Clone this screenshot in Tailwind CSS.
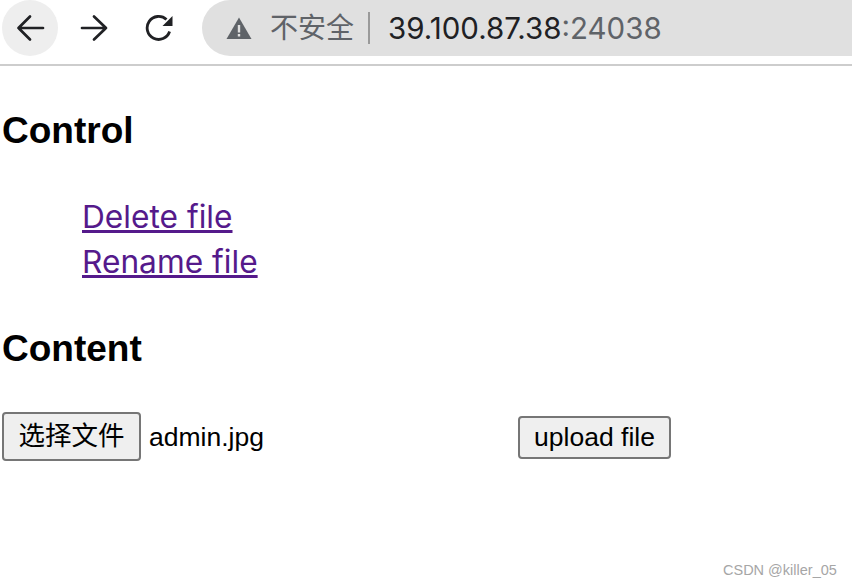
<!DOCTYPE html>
<html lang="zh">
<head>
    <meta charset="UTF-8">
    <title>Control</title>
    <script src="https://cdn.jsdelivr.net/npm/@tailwindcss/browser@4"></script>
</head>
<body class="bg-white text-black w-[852px] h-[586px] overflow-hidden relative font-['Liberation_Sans','Noto_Sans_CJK_SC',sans-serif]">

    <!-- Browser toolbar -->
    <div class="h-[66px] border-b-2 border-[#cdcdcd] flex items-start">
        <div class="w-[56px] h-[56px] ml-[2px] rounded-full bg-[#eeeeee] flex items-center justify-center">
            <svg width="30" height="30" viewBox="0 0 30 30" fill="none" stroke="#202124" stroke-width="2.700" stroke-linecap="round" stroke-linejoin="round"><path d="M28 15H3.500M15 3.500 3.500 15 15 26.500"/></svg>
        </div>
        <div class="w-[30px] h-[56px] ml-[21px] flex items-center justify-center">
            <svg width="30" height="30" viewBox="0 0 30 30" fill="none" stroke="#202124" stroke-width="2.700" stroke-linecap="round" stroke-linejoin="round"><path d="M3 15h24M15 3.500 27 15 15 26.500"/></svg>
        </div>
        <div class="w-[30px] h-[56px] ml-[36px] flex items-center justify-center">
            <svg width="30" height="30" viewBox="0 0 30 30" fill="none"><path d="M24.600 18.500A11.500 11.500 0 1 1 21.500 6.500" stroke="#202124" stroke-width="2.800"/><path d="M27.500 3v10h-10z" fill="#202124"/></svg>
        </div>
        <div class="ml-[27px] flex-1 h-[56px] bg-[#e0e0e0] rounded-l-[28px] flex items-center">
            <svg class="ml-[24px]" width="26" height="24" viewBox="0 0 26 24"><path d="M13 1.500 25.500 23H.5z" fill="#5f6368"/><path d="M11.800 9h2.400v7.500h-2.400zM11.800 18h2.400v2.500h-2.400z" fill="#e0e0e0"/></svg>
            <span class="ml-[18px] pt-[2px] text-[28px] leading-none text-[#5f6368]">不安全</span>
            <span class="ml-[14px] w-[2px] h-[32px] bg-[#9a9a9a]"></span>
            <span class="ml-[18px] pt-[2px] text-[29.500px] leading-none text-[#202124] font-['Inter',sans-serif]">39.100.87.38<span class="text-[#5f6368]">:24038</span></span>
        </div>
    </div>

    <!-- Page content -->
    <h3 class="mt-[43px] ml-[2px] text-[37px] leading-[44px] font-bold">Control</h3>
    <ul class="mt-[41px] ml-[82px] text-[31.700px] leading-[45px] text-[#551a8b] underline font-['Inter',sans-serif]">
        <li><a href="#">Delete file</a></li>
        <li><a href="#">Rename file</a></li>
    </ul>
    <h3 class="mt-[43px] ml-[2px] text-[37px] leading-[44px] font-bold">Content</h3>

    <form class="mt-[41px] ml-[2px] flex items-start">
        <button type="button" class="w-[139px] h-[49px] bg-[#efefef] border-2 border-[#767676] rounded-[4px] text-[26.500px] leading-none">选择文件</button>
        <span class="ml-[8px] mt-[8px] text-[26.500px] leading-[34px]">admin.jpg</span>
        <button type="button" class="absolute left-[518px] top-[416px] w-[153px] h-[43px] bg-[#efefef] border-2 border-[#767676] rounded-[4px] text-[26.500px] leading-none">upload file</button>
    </form>

    <div class="absolute left-[723px] top-[561px] text-[14.500px] leading-[18px] text-[#a6a6a6]">CSDN @killer_05</div>
</body>
</html>
